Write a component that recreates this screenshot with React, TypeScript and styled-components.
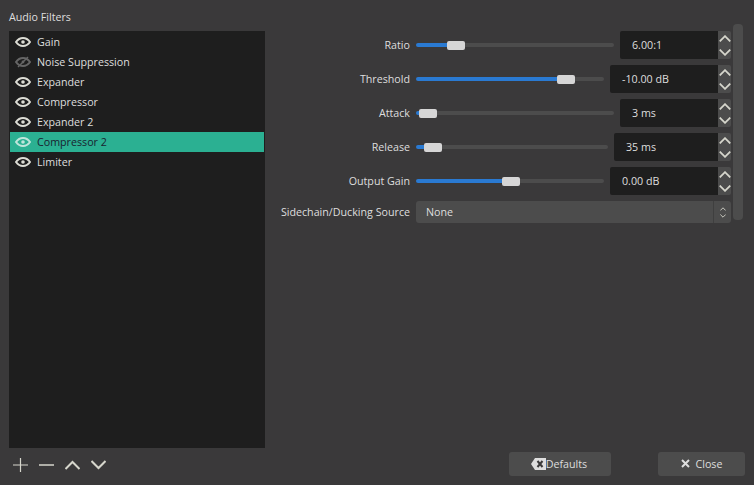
import styled, { createGlobalStyle } from "styled-components";

const GlobalStyle = createGlobalStyle`
  html, body {
    margin: 0;
    padding: 0;
    background: #3a393a;
  }
`;

const Window = styled.div`
  width: 754px;
  height: 485px;
  overflow: hidden;
  display: flex;
  flex-direction: column;
  background: #3a393a;
  color: #dedede;
  font-family: "Open Sans", sans-serif;
  font-size: 10.7px;
`;

const Body = styled.div`
  display: flex;
  height: 448px;
  padding-left: 9px;
  gap: 5px;
`;

const LeftColumn = styled.div`
  width: 256px;
  display: flex;
  flex-direction: column;
`;

const Title = styled.div`
  height: 31px;
  padding-top: 11px;
  box-sizing: border-box;
  line-height: 13px;
`;

const FilterList = styled.ul`
  flex: 1;
  list-style: none;
  margin: 0;
  padding: 1px;
  background: #1e1e1e;
`;

const FilterItem = styled.li<{ $selected?: boolean }>`
  height: 20px;
  display: flex;
  align-items: center;
  gap: 6px;
  padding-left: 5px;
  background: ${({ $selected }) => ($selected ? "#2bb092" : "transparent")};
  color: ${({ $selected }) => ($selected ? "#1a2230" : "#dedede")};
`;

const FilterName = styled.span`
  padding-bottom: 1px;
`;

const RightColumn = styled.div`
  flex: 1;
  display: flex;
  gap: 2px;
  padding: 24px 11px 0 0;
  align-items: flex-start;
`;

const Form = styled.div`
  flex: 1;
  display: flex;
  flex-direction: column;
  gap: 6px;
  padding-top: 7px;
`;

const FormRow = styled.div`
  display: grid;
  grid-template-columns: 140px 1fr;
  column-gap: 6px;
  align-items: center;
`;

const Label = styled.label`
  text-align: right;
  white-space: nowrap;
  padding-bottom: 1px;
`;

const ControlRow = styled.div`
  display: flex;
  align-items: center;
  gap: 6px;
`;

const Slider = styled.div`
  flex: 1;
  display: flex;
  align-items: center;
  height: 10px;
`;

const SliderFill = styled.div`
  height: 4px;
  background: #2a7ad2;
  border-radius: 2px 0 0 2px;
`;

const SliderThumb = styled.div`
  width: 18px;
  height: 9px;
  flex: none;
  background: #d6d6d6;
  border-radius: 2px;
`;

const SliderRest = styled.div`
  flex: 1;
  height: 4px;
  background: #4c4c4c;
  border-radius: 0 2px 2px 0;
`;

const SpinBox = styled.div<{ $width: number }>`
  width: ${({ $width }) => $width}px;
  height: 28px;
  flex: none;
  display: flex;
`;

const SpinValue = styled.div`
  flex: 1;
  display: flex;
  align-items: center;
  padding: 0 0 1px 12px;
  background: #1e1e1e;
  border-radius: 2px 0 0 2px;
`;

const SpinButtons = styled.div`
  width: 13px;
  display: flex;
  flex-direction: column;
  align-items: center;
  justify-content: space-around;
  background: #4c4c4c;
  border-radius: 0 2px 2px 0;
`;

const Combo = styled.div`
  height: 22px;
  display: flex;
  align-items: center;
  background: #4c4c4c;
  border-radius: 3px;
`;

const ComboText = styled.div`
  flex: 1;
  padding: 0 0 1px 10px;
`;

const ComboArrows = styled.div`
  width: 18px;
  height: 22px;
  display: flex;
  flex-direction: column;
  align-items: center;
  justify-content: center;
  gap: 3px;
  border-left: 1px solid #3f3f3f;
  box-sizing: border-box;
`;

const Scrollbar = styled.div`
  width: 10px;
  height: 196px;
  flex: none;
  background: #4c4c4c;
  border-radius: 4px;
`;

const Footer = styled.div`
  flex: 1;
  display: flex;
  padding: 4px 9px 0 13px;
  align-items: flex-start;
`;

const Toolbar = styled.div`
  display: flex;
  gap: 11px;
  margin-top: 4px;
`;

const ToolIcon = styled.svg`
  width: 15px;
  height: 18px;
  fill: none;
  stroke: #d6d6cc;
  stroke-width: 1.2;
`;

const Button = styled.div<{ $width: number }>`
  width: ${({ $width }) => $width}px;
  height: 24px;
  padding-bottom: 1px;
  box-sizing: border-box;
  display: flex;
  align-items: center;
  justify-content: center;
  background: #4c4c4c;
  border-radius: 3px;
`;

const DefaultsButton = styled(Button)`
  margin-left: auto;
  margin-right: 47px;
  padding-right: 2px;
`;

const CloseGlyph = styled.svg`
  width: 9px;
  height: 9px;
  margin-right: 6px;
  stroke: #dedede;
  stroke-width: 2;
`;

const BackspaceGlyph = styled.svg`
  width: 15px;
  height: 12px;
`;

function EyeIcon({ off, tint }: { off?: boolean; tint?: string }) {
  const color = tint ?? (off ? "#666" : "#dcdcd4");
  return (
    <svg width="16" height="12" viewBox="0 0 16 12" fill="none">
      <path
        d="M1 6C3 3.2 5.4 2 8 2S13 3.2 15 6C13 8.8 10.6 10 8 10S3 8.8 1 6Z"
        stroke={color}
        strokeWidth="2"
      />
      <circle cx="8" cy="6" r={off ? 1.4 : 1.8} fill={color} />
      {off && <path d="M3 11L13 1" stroke={color} strokeWidth="1.4" />}
    </svg>
  );
}

function Chevron({ up, size = 9 }: { up?: boolean; size?: number }) {
  return (
    <svg width={size} height={size / 2 + 1} viewBox="0 0 10 6" fill="none">
      <path
        d={up ? "M0.5 5.5L5 1L9.5 5.5" : "M0.5 0.5L5 5L9.5 0.5"}
        stroke="#d6d6cc"
        strokeWidth="1.5"
      />
    </svg>
  );
}

const filters = [
  { name: "Gain" },
  { name: "Noise Suppression", off: true },
  { name: "Expander" },
  { name: "Compressor" },
  { name: "Expander 2" },
  { name: "Compressor 2", selected: true },
  { name: "Limiter" },
];

const params = [
  { label: "Ratio", value: "6.00:1", position: 0.172, spin: 111 },
  { label: "Threshold", value: "-10.00 dB", position: 0.83, spin: 121 },
  { label: "Attack", value: "3 ms", position: 0.015, spin: 111 },
  { label: "Release", value: "35 ms", position: 0.046, spin: 117 },
  { label: "Output Gain", value: "0.00 dB", position: 0.506, spin: 121 },
];

export default function App() {
  return (
    <Window>
      <GlobalStyle />
      <Body>
        <LeftColumn>
          <Title>Audio Filters</Title>
          <FilterList>
            {filters.map((filter) => (
              <FilterItem key={filter.name} $selected={filter.selected}>
                <EyeIcon off={filter.off} tint={filter.selected ? "#bfe6dc" : undefined} />
                <FilterName>{filter.name}</FilterName>
              </FilterItem>
            ))}
          </FilterList>
        </LeftColumn>
        <RightColumn>
          <Form>
            {params.map((param) => (
              <FormRow key={param.label}>
                <Label>{param.label}</Label>
                <ControlRow>
                  <Slider>
                    <SliderFill style={{ width: `calc((100% - 18px) * ${param.position})` }} />
                    <SliderThumb />
                    <SliderRest />
                  </Slider>
                  <SpinBox $width={param.spin}>
                    <SpinValue>{param.value}</SpinValue>
                    <SpinButtons>
                      <Chevron up size={12} />
                      <Chevron size={12} />
                    </SpinButtons>
                  </SpinBox>
                </ControlRow>
              </FormRow>
            ))}
            <FormRow>
              <Label>Sidechain/Ducking Source</Label>
              <Combo>
                <ComboText>None</ComboText>
                <ComboArrows>
                  <Chevron up size={6} />
                  <Chevron size={6} />
                </ComboArrows>
              </Combo>
            </FormRow>
          </Form>
          <Scrollbar />
        </RightColumn>
      </Body>
      <Footer>
        <Toolbar>
          <ToolIcon viewBox="0 0 15 18">
            <path d="M0 9H15M7.5 2V16" />
          </ToolIcon>
          <ToolIcon viewBox="0 0 15 18">
            <path d="M0 9H15" strokeWidth="1.5" />
          </ToolIcon>
          <ToolIcon viewBox="0 0 15 18">
            <path d="M0.5 13L7.5 6L14.5 13" strokeWidth="2" />
          </ToolIcon>
          <ToolIcon viewBox="0 0 15 18">
            <path d="M0.5 5L7.5 12L14.5 5" strokeWidth="2" />
          </ToolIcon>
        </Toolbar>
        <DefaultsButton $width={102}>
          <BackspaceGlyph viewBox="0 0 15 12">
            <path d="M4 0H15V12H4L0 6Z" fill="#dedede" />
            <path d="M6.5 3L11.5 9M11.5 3L6.5 9" stroke="#3a393a" strokeWidth="2" />
          </BackspaceGlyph>
          Defaults
        </DefaultsButton>
        <Button $width={87}>
          <CloseGlyph viewBox="0 0 9 9">
            <path d="M1 1L8 8M8 1L1 8" />
          </CloseGlyph>
          Close
        </Button>
      </Footer>
    </Window>
  );
}
